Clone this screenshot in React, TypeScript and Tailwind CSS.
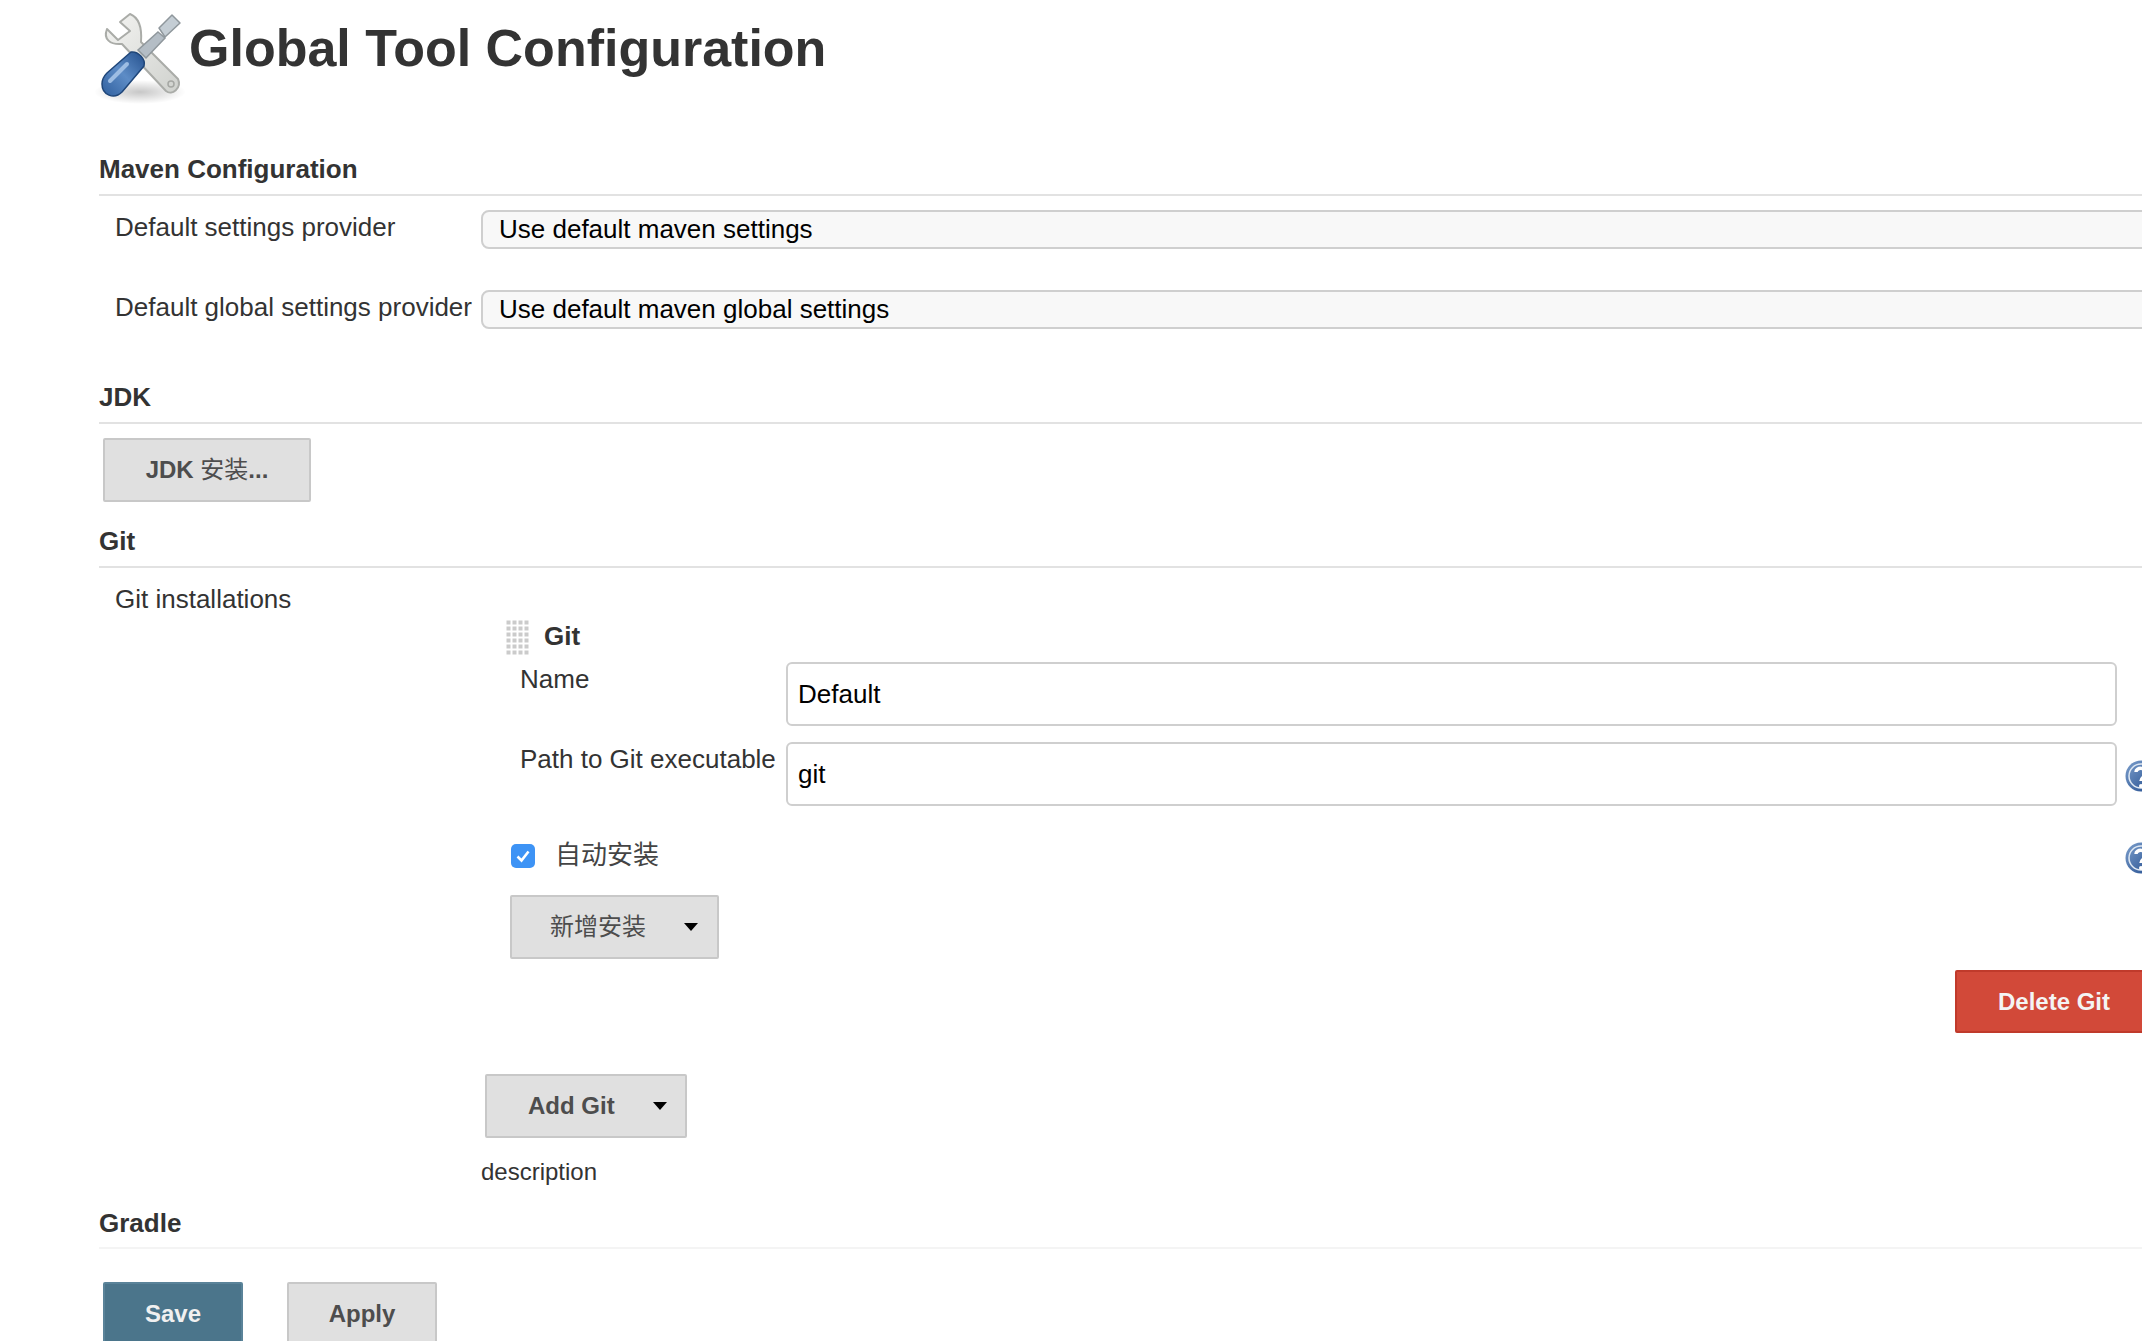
import React from 'react';

const sans = 'font-["Liberation_Sans","Noto_Sans_CJK_SC",sans-serif]';

function SectionHead({ title, faint }: { title: string; faint?: boolean }) {
  return (
    <div className={`border-b-2 ${faint ? 'h-[41px] border-[#f4f4f4]' : 'h-[42px] border-[#e2e2e2]'}`}>
      <div className="text-[26px] leading-[30px] font-bold text-[#333]">{title}</div>
    </div>
  );
}

function Caret() {
  return <span className="ml-[38px] w-0 h-0 border-x-[7px] border-x-transparent border-t-[8px] border-t-black" />;
}

function GreyButton({ children, className }: { children: React.ReactNode; className: string }) {
  return (
    <div className={`flex items-center h-[64px] bg-[#e0e0e0] border-2 border-[#c8c8c8] rounded-[2px] text-[24px] text-[#4d4d4d] ${className}`}>
      {children}
    </div>
  );
}

function Help() {
  return (
    <svg width="32" height="32" viewBox="0 0 32 32" className="shrink-0">
      <defs>
        <linearGradient id="helpBlue" x1="0" y1="0" x2="1" y2="1">
          <stop offset="0" stopColor="#7d9fcc" />
          <stop offset="1" stopColor="#1f4a8c" />
        </linearGradient>
      </defs>
      <circle cx="16" cy="16" r="15.5" fill="url(#helpBlue)" />
      <circle cx="16" cy="16" r="12" fill="none" stroke="#dfe8f3" strokeWidth="1.5" />
      <path d="M11 12 C11 7 21 7 21 13 C21 17 16 17 16 21" fill="none" stroke="#fff" strokeWidth="3.5" />
      <circle cx="16" cy="26" r="2" fill="#fff" />
    </svg>
  );
}

function ToolIcon() {
  return (
    <svg width="96" height="96" viewBox="0 0 96 96" className="shrink-0">
      <defs>
        <linearGradient id="metal" x1="0" y1="0" x2="1" y2="1">
          <stop offset="0" stopColor="#f4f4f2" />
          <stop offset="1" stopColor="#cfd1cd" />
        </linearGradient>
        <linearGradient id="handle" x1="0" y1="1" x2="1" y2="0">
          <stop offset="0" stopColor="#2f5f9e" />
          <stop offset="0.5" stopColor="#5d8cc6" />
          <stop offset="1" stopColor="#234f8c" />
        </linearGradient>
        <radialGradient id="shade">
          <stop offset="0" stopColor="#000" stopOpacity="0.22" />
          <stop offset="1" stopColor="#000" stopOpacity="0" />
        </radialGradient>
      </defs>
      <ellipse cx="46" cy="80" rx="46" ry="12" fill="url(#shade)" />
      <path d="M36 2 L26 10 L36 19 L24 28 L13 17 C9 27 16 33 28 32 L72 79 C78 84 88 76 84 67 L47 30 C48 17 46 6 36 2 Z" fill="url(#metal)" stroke="#aaaca8" strokeWidth="2" strokeLinejoin="round" />
      <circle cx="77" cy="72" r="3" fill="none" stroke="#a5a7a3" strokeWidth="1.5" />
      <path d="M64 20 L71 26 L52 46 L44 38 Z" fill="#b4bdc5" stroke="#8f979c" strokeWidth="1.5" />
      <path d="M78 3 L86 11 L71 25 L65 16 Z" fill="#c4cdd4" stroke="#8f979c" strokeWidth="1.5" strokeLinejoin="round" />
      <path d="M37 40 C44 39 52 47 50 54 L28 80 C20 88 8 83 8 72 C8 68 10 64 13 61 Z" fill="url(#handle)" stroke="#1f4679" strokeWidth="1.5" strokeLinejoin="round" />
      <path d="M16 69 L33 52" stroke="#9dbde3" strokeWidth="4" strokeLinecap="round" />
    </svg>
  );
}

function DragHandle() {
  const cells: React.ReactNode[] = [];
  for (let r = 0; r < 6; r++) {
    for (let c = 0; c < 4; c++) {
      cells.push(<rect key={`${r}-${c}`} x={c * 6 + 0.5} y={r * 6 + 0.5} width="4" height="4" fill="#cbcbcb" />);
    }
  }
  return (
    <svg width="24" height="35" viewBox="0 0 24 35" className="shrink-0">
      {cells}
    </svg>
  );
}

function Check() {
  return (
    <div className="w-[24px] h-[24px] rounded-[5px] bg-[#3d93f5] flex items-center justify-center shrink-0">
      <svg width="18" height="18" viewBox="0 0 18 18">
        <path d="M3.5 9.5 L7.5 13.5 L14.5 4.5" fill="none" stroke="#fff" strokeWidth="2.6" />
      </svg>
    </div>
  );
}

function SelectBox({ value }: { value: string }) {
  return (
    <div className="h-[39px] flex-1 flex items-center pl-[16px] bg-[#f8f8f8] border-2 border-[#cfcfcf] rounded-[8px] text-[26px] text-black">
      {value}
    </div>
  );
}

function TextBox({ value }: { value: string }) {
  return (
    <div className="w-[1331px] h-[64px] flex items-center pl-[10px] bg-white border-2 border-[#cfcfcf] rounded-[6px] text-[26px] text-black">
      {value}
    </div>
  );
}

export default function App() {
  return (
    <div className={`w-[2142px] h-[1341px] overflow-hidden bg-white text-[#333] ${sans}`}>
      <div className="w-[2157px] pl-[99px]">
        <div className="flex items-start h-[154px] pt-[12px] -ml-[5px]">
          <ToolIcon />
          <h1 className="-ml-[1px] mt-[6px] text-[52px] leading-[60px] font-bold">Global Tool Configuration</h1>
        </div>

        <SectionHead title="Maven Configuration" />

        <div className="flex items-start pt-[14px] pl-[16px]">
          <div className="w-[366px] text-[26px] leading-[30px] pt-[2px]">Default settings provider</div>
          <SelectBox value="Use default maven settings" />
        </div>
        <div className="flex items-start pt-[41px] pl-[16px]">
          <div className="w-[366px] text-[26px] leading-[30px] pt-[2px]">Default global settings provider</div>
          <SelectBox value="Use default maven global settings" />
        </div>

        <div className="pt-[53px]">
          <SectionHead title="JDK" />
        </div>
        <div className="pt-[14px] pl-[4px]">
          <GreyButton className="w-[208px] justify-center font-bold">
            <span>JDK <span className="font-normal">安装</span>...</span>
          </GreyButton>
        </div>

        <div className="pt-[24px]">
          <SectionHead title="Git" />
        </div>

        <div className="flex items-start pt-[16px] pl-[16px]">
          <div className="w-[366px] text-[26px] leading-[30px]">Git installations</div>
          <div className="flex-1 min-w-0">
            <div className="pl-[25px] pt-[36px]">
              <div className="flex items-center gap-[14px]">
                <DragHandle />
                <div className="-mt-[3px] text-[26px] leading-[30px] font-bold">Git</div>
              </div>

              <div className="flex items-start pl-[14px] pt-[7px]">
                <div className="w-[266px] text-[26px] leading-[30px] pt-[2px]">Name</div>
                <TextBox value="Default" />
              </div>
              <div className="flex items-start pl-[14px] pt-[16px]">
                <div className="w-[266px] text-[26px] leading-[30px] pt-[2px]">Path to Git executable</div>
                <TextBox value="git" />
                <div className="ml-[8px] mt-[18px]"><Help /></div>
              </div>

              <div className="flex items-start h-[32px] mt-[36px]">
                <div className="ml-[5px] mt-[2px]"><Check /></div>
                <div className="ml-[20px] -mt-[2px] text-[26px] leading-[30px] text-[#444]">自动安装</div>
                <div className="ml-auto"><Help /></div>
              </div>

              <div className="pt-[21px] pl-[4px]">
                <GreyButton className="w-[209px] pl-[38px]">
                  <span>新增安装</span>
                  <Caret />
                </GreyButton>
              </div>

              <div className="flex justify-end pt-[11px]">
                <div className="w-[202px] h-[63px] flex items-center pl-[41px] bg-[#d24939] border-2 border-[#c03a2b] rounded-[2px] text-[24px] font-bold text-[#f4f4f4]">Delete Git</div>
              </div>
            </div>

            <div className="pt-[41px] pl-[4px]">
              <GreyButton className="w-[202px] pl-[41px] font-bold">
                <span>Add Git</span>
                <Caret />
              </GreyButton>
            </div>
            <div className="pt-[19px] text-[24px] leading-[30px]">description</div>
          </div>
        </div>

        <div className="pt-[21px]">
          <SectionHead title="Gradle" faint />
        </div>

        <div className="flex gap-[44px] pt-[33px] pl-[4px]">
          <div className="w-[140px] h-[64px] flex items-center justify-center bg-[#4b758b] border-2 border-[#5a8399] rounded-[2px] text-[24px] font-bold text-[#f0f0f0]">Save</div>
          <GreyButton className="w-[150px] justify-center font-bold">Apply</GreyButton>
        </div>
      </div>
    </div>
  );
}
